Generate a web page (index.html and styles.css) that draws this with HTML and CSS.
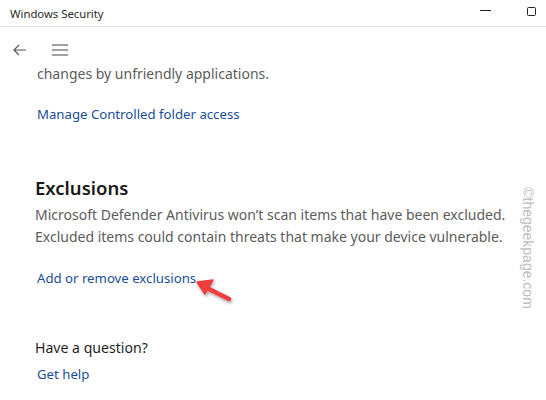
FILE: index.html
```html
<!DOCTYPE html>
<html>
<head>
<meta charset="utf-8">
<link rel="stylesheet" href="styles.css">
</head>
<body>
<div class="window">
  <div class="titlebar">
    <span class="title">Windows Security</span>
    <svg class="controls" width="70" height="26" viewBox="0 0 70 26">
      <rect x="13" y="10" width="11" height="1" fill="#222"/>
      <rect x="60.5" y="7.5" width="8" height="8" rx="1" fill="none" stroke="#222" stroke-width="1"/>
    </svg>
  </div>
  <div class="nav">
    <svg class="back" width="14" height="12" viewBox="0 0 14 12"><path d="M6 1 L1 6 L6 11 M1 6 H13" fill="none" stroke="#555" stroke-width="1.2"/></svg>
    <svg class="menu" width="16" height="12" viewBox="0 0 16 12"><path d="M0 1 H16 M0 6 H16 M0 11 H16" fill="none" stroke="#444" stroke-width="1.1"/></svg>
  </div>
  <div class="content">
    <p class="desc first">changes by unfriendly applications.</p>
    <a class="link l1">Manage Controlled folder access</a>
    <h2 class="heading">Exclusions</h2>
    <p class="desc d2">Microsoft Defender Antivirus won’t scan items that have been excluded.<br>Excluded items could contain threats that make your device vulnerable.</p>
    <a class="link l2">Add or remove exclusions</a>
    <p class="question">Have a question?</p>
    <a class="link l3">Get help</a>
  </div>
  <div class="watermark">©thegeekpage.com</div>
  <svg class="arrow" width="546" height="400" viewBox="0 0 546 400">
    <defs>
      <filter id="sh" x="-50%" y="-50%" width="200%" height="200%">
        <feDropShadow dx="1" dy="2" stdDeviation="1.5" flood-color="#000" flood-opacity="0.35"/>
      </filter>
    </defs>
    <g filter="url(#sh)">
      <path d="M229 299 L207 288" stroke="#f03c3c" stroke-width="4.5" stroke-linecap="round"/>
      <path d="M197 282 L213 280 L205 294 Z" fill="#f03c3c" stroke="#f03c3c" stroke-width="1.5" stroke-linejoin="round"/>
    </g>
  </svg>
</div>
</body>
</html>
```
FILE: styles.css
```css
html, body {
  margin: 0;
  padding: 0;
  background: #ffffff;
}
.window {
  position: relative;
  width: 546px;
  height: 400px;
  overflow: hidden;
  font-family: "Noto Sans", "Open Sans", sans-serif;
}
.titlebar {
  height: 26px;
  border-bottom: 1px solid #e6e6e6;
  display: flex;
  align-items: center;
  justify-content: space-between;
  padding-left: 10px;
}
.title {
  font-size: 11.3px;
  color: #2a2a2a;
}
.controls {
  display: block;
  flex: none;
  margin-right: 9px;
}
.nav {
  height: 26px;
  padding-top: 10px;
  display: flex;
  align-items: center;
  padding-left: 13px;
}
.menu {
  margin-left: 25px;
}
.content {
  padding-left: 37px;
}
.desc {
  margin: 0;
  font-size: 14px;
  line-height: 22px;
  color: #5c5c5c;
}
.d2 {
  margin-left: -2px;
  margin-top: 2px;
}
.link {
  display: block;
  font-size: 13.2px;
  line-height: 20px;
  color: #1a4d98;
}
.l1 { margin-top: 19px; }
.l2 { margin-top: 20px; }
.l3 { margin-top: 5px; }
.heading {
  margin: 50px 0 0 -2px;
  font-size: 18.5px;
  line-height: 28px;
  font-weight: 600;
  color: #1a1a1a;
}
.question {
  margin: 49px 0 0 -2px;
  font-size: 14.1px;
  line-height: 22px;
  color: #1f1f1f;
}
.watermark {
  position: absolute;
  left: 528px;
  top: 248px;
  transform: translate(-50%, -50%) rotate(90deg);
  white-space: nowrap;
  font-family: "Liberation Sans", sans-serif;
  font-size: 14px;
  color: #bdbdbd;
}
.arrow {
  position: absolute;
  left: 0;
  top: 0;
  pointer-events: none;
}
```
